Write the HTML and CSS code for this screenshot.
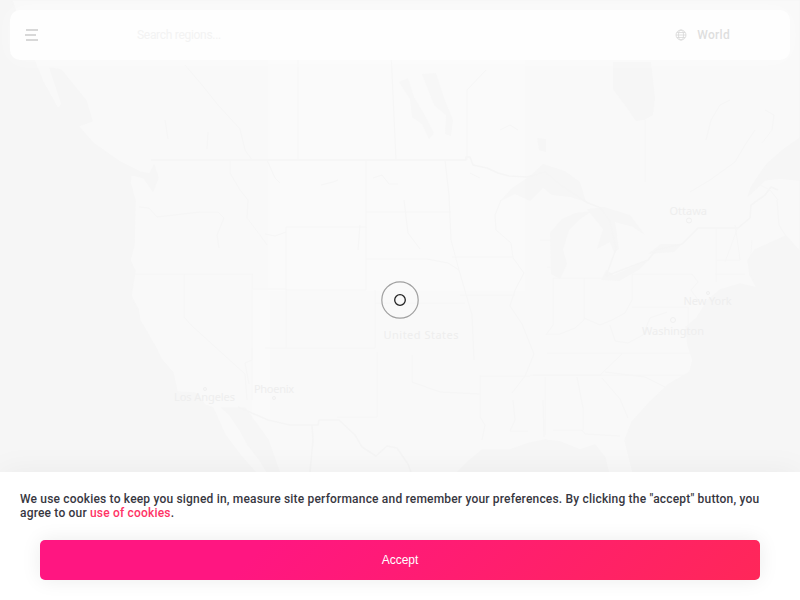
FILE: index.html
```html
<!DOCTYPE html>
<html lang="en">
<head>
<meta charset="utf-8">
<title>Map</title>
<link rel="stylesheet" href="styles.css">
</head>
<body>
<div class="app">
  <svg class="map" viewBox="0 0 800 600" aria-hidden="true">
    <path class="land" d="M12 0L18 18L32 55L43 82L58 109L62 104L50 68L61 70L75 87L86 101L92 121L78 126L93 143L120 162L140 172L150 174L154 165L158 178L153 191L144 178L131 174L130 183L135 200L134 245L130 260L135 271L131 296L138 309L140 321L148 334L157 350L161 359L173 373L177 392L195 393L205 405L213 408L225 435L240 455L255 472L272 480L260 460L248 445L240 430L230 415L222 408L245 408L268 440L282 480L450 480L470 460L482 450L510 450L530 443L545 440L560 442L580 450L595 445L605 458L610 480L635 480L625 440L632 422L650 402L668 385L690 372L693 360L688 345L686 327L697 318L708 300L720 290L740 284L757 288L750 275L748 260L755 250L786 236L800 252V180L780 178L765 180L748 196L752 186L767 164L783 150L800 138V0Z"/>
    <g class="water">
      <path d="M422 74L436 73L444 98L453 120L451 136L445 134L446 115L434 105ZM399 82L408 78L414 97L424 114L434 133L429 139L422 124L412 117L410 99Z"/>
      <path d="M613 62H651L655 98L653 115L644 120L636 121L627 108L613 89ZM537 138L546 139L546 152L539 150Z"/>
      <path d="M499 202L512 188L530 176L543 164L565 171L580 182L586 202L570 197L552 195L543 188L530 201L515 194Z"/>
      <path d="M550 233L562 219L575 213L592 211L580 219L569 230L563 250L567 264L560 279L551 274ZM587 209L604 207L630 215L645 235L633 227L615 222L619 249L614 252L610 242L597 249L603 229ZM601 280L606 270L614 275L648 260L640 269L619 281ZM648 254L661 244L682 244L674 252Z"/>
    </g>
    <rect class="tile" x="268" y="30" width="257" height="261"/>
    <path class="tile" d="M252 289H270V420H252Z"/>
    <g class="lines">
      <path class="strong" d="M151 160H466V157L470 157L473 165L487 168L498 173L509 176L527 177L545 172L562 186L588 203L601 208L610 222L616 249L606 276L648 260L656 250L682 244L698 228H738L750 218L751 205L765 195L771 187L778 190"/>
      <path d="M185 65L202 85L218 105L240 129L245 150L252 160M298 60V160M390 30L396 160M467 160V90L486 70M230 160V173L240 190L248 200L247 218L260 235L267 245M267 160L275 178L280 183M366 160V228M366 212H451M445 160L449 195L451 240L459 270L472 315L474 360M286 227H366V290H286ZM366 259H427L448 263L459 270M404 200L408 233L420 249M139 207L149 208L157 217L200 212H218L224 218L217 235L219 248M133 274H253M184 274V317L191 325M252 274V360L245 363L249 384M253 289H286V348M191 325L245 374L247 400M375 290V348H265M252 348V400M377 352V417H337M375 303H465M452 257H512M501 200L495 215L496 230L511 243L513 258L524 273L515 290L510 306L522 324L534 354L525 376L512 393M412 355V382L440 392L480 394M460 295H515M480 376H530M533 375H700M547 267H554M553 278V325L546 335M584 278V320L575 328L560 334H547M553 278H603M584 318L600 325L612 320L625 313L632 300V274H692L698 282L691 290L698 300M632 307H688V325M610 325L615 341L628 343L643 335L650 318L667 312M547 353H690M530 375H600L622 354M545 377V435M577 377L583 408V430M602 378L620 399L628 418M605 372L645 377L665 387M716 228V282M725 262L738 227M735 225L740 260H717M715 274H745M752 240L750 265M777 200L779 225L787 238"/>
      <path class="strong" d="M238 407L268 420L290 425H318L319 420H339L355 435L362 447L376 456L387 446L397 448L408 464L413 478M312 425L313 440L310 472"/>
      <path d="M480 375V417L485 425L482 440M513 400L515 420L510 431H528M543 400L544 437M553 430H582L585 434L620 436M690 192L710 180L735 162L745 145L755 130M760 185L770 190L778 200"/>
      <path d="M645 120V182M540 240H550M360 225L358 250M165 120L168 139M208 132L207 149M321 185L333 182L338 180M373 178L382 175L389 184H398M480 178L470 173M500 130L510 125L518 130M706 140L711 120L720 105L730 100M765 110L774 115L772 130L762 143M265 234L275 236L286 232"/>
    </g>
    <g class="dots">
      <circle cx="689" cy="220.500" r="2.500"/><circle cx="673" cy="320" r="2.500"/>
      <circle cx="708" cy="293" r="1.500"/><circle cx="274" cy="398" r="1.500"/><circle cx="205" cy="389" r="1.500"/>
    </g>
    <g class="labels">
      <text x="669.500" y="214.500" textLength="37.500">Ottawa</text>
      <text x="683.500" y="305" textLength="48">New York</text>
      <text x="642" y="335" textLength="62">Washington</text>
      <text x="383.500" y="339" textLength="75">United States</text>
      <text x="254" y="393" textLength="40">Phoenix</text>
      <text x="174" y="401" textLength="61">Los Angeles</text>
    </g>
  </svg>

  <header class="topbar">
    <svg class="menu" viewBox="0 0 14 12"><path d="M1 1H13M0 6H11M1 11H13"/></svg>
    <span class="search">Search regions...</span>
    <svg class="globe" viewBox="0 0 12 12"><circle cx="6" cy="6" r="5"/><ellipse cx="6" cy="6" rx="2.500" ry="5"/><path d="M1 6H11M2 3.500H10M2 8.500H10"/></svg>
    <span class="region">World</span>
  </header>

  <svg class="loader" viewBox="0 0 40 40"><circle class="outer" cx="20" cy="20" r="18.200"/><circle class="inner" cx="20" cy="20" r="5.300"/></svg>

  <section class="cookies">
    <p>We use cookies to keep you signed in, measure site performance and remember your preferences. By clicking the "accept" button, you agree to our <a>use of cookies</a>.</p>
    <button type="button">Accept</button>
  </section>
</div>
</body>
</html>
```
FILE: styles.css
```css
* { box-sizing: border-box; }
body { margin: 0; font-family: Roboto, sans-serif; }
.app {
  position: relative;
  display: flex;
  flex-direction: column;
  justify-content: space-between;
  width: 800px;
  height: 600px;
  padding-top: 10px;
  overflow: hidden;
  background: #f6f6f6;
}
.map { position: absolute; inset: 0; width: 800px; height: 600px; }
.land { fill: #f9f9f9; stroke: #f6f6f6; stroke-width: 1.5; stroke-linejoin: round; }
.water { fill: #f6f6f6; }
.lines { fill: none; stroke: #f6f6f6; stroke-width: 1; stroke-linejoin: round; }
.strong { stroke: #f5f5f5; stroke-width: 1.6; }
.tile { fill: #fff; opacity: .2; }
.dots { fill: none; stroke: #f0f0f0; }
.labels { font: 11px "Noto Sans", sans-serif; fill: #eee; }
.topbar {
  position: relative;
  display: flex;
  align-items: center;
  height: 50px;
  margin: 0 10px;
  padding: 0 60px 0 15px;
  border-radius: 10px;
  background: #fefefe;
  box-shadow: 0 0 20px rgba(255, 255, 255, .5);
  font-size: 12px;
}
.menu { width: 14px; height: 12px; margin-right: 98px; fill: none; stroke: #d8d8d8; stroke-width: 2; }
.search { color: #f3f3f3; letter-spacing: -.3px; }
.globe { width: 12px; height: 12px; margin-left: auto; margin-right: 10px; fill: none; stroke: #d8d8d8; stroke-width: .8; }
.region { color: #dedede; font-weight: 500; letter-spacing: .3px; }
.loader { position: absolute; left: 380px; top: 280px; width: 40px; height: 40px; fill: none; }
.outer { stroke: #a0a0a0; stroke-width: 1.2; }
.inner { stroke: #222; stroke-width: 1.3; }
.cookies {
  position: relative;
  height: 128px;
  padding: 20px;
  background: #fff;
  box-shadow: 0 0 30px rgba(0, 0, 0, .05);
}
.cookies p { margin: 0 0 20px; color: #37373f; font-size: 12px; font-weight: 500; line-height: 14px; letter-spacing: .185px; }
.cookies a { color: #ff3366; }
.cookies button {
  display: block;
  width: 720px;
  height: 40px;
  margin: 0 20px;
  border: 0;
  border-radius: 5px;
  background: linear-gradient(135deg, #ff1681 30%, #ff2759 100%);
  box-shadow: 0 0 20px rgba(0, 0, 0, .08);
  color: #fff;
  font: 12px "Liberation Sans", sans-serif;
}
```
